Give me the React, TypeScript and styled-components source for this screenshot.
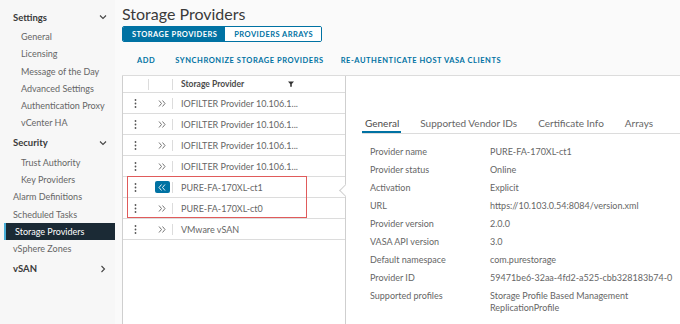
import { Fragment } from "react";
import styled, { createGlobalStyle } from "styled-components";

const GlobalStyle = createGlobalStyle`
  html, body { margin: 0; padding: 0; }
  body {
    font-family: Lato, "Open Sans", sans-serif;
    color: #666;
    background: #fff;
  }
  * { box-sizing: border-box; }
`;

const Page = styled.div`
  display: flex;
  width: 680px;
  height: 324px;
  overflow: hidden;
`;

// ---------- sidebar ----------
const Sidebar = styled.nav`
  width: 115px;
  flex-shrink: 0;
  background: #f7f7f7;
  padding-top: 8px;
  display: flex;
  flex-direction: column;
`;

const GroupHeader = styled.div<{ $first?: boolean }>`
  display: flex;
  align-items: center;
  justify-content: space-between;
  height: 18px;
  margin: ${(p) => (p.$first ? "0 0 2px" : "2px 0")};
  padding: 0 8px 0 13px;
  font-size: 9.5px;
  font-weight: 700;
  color: #3a3a3a;
`;

const NavItem = styled.div<{ $child?: boolean; $active?: boolean }>`
  height: 17.3px;
  line-height: 17.3px;
  font-size: 9px;
  white-space: nowrap;
  padding-left: ${(p) => (p.$child ? 21 : 13)}px;
  color: #666;
  ${(p) =>
    p.$active &&
    `
    margin-left: 4px;
    padding-left: 9px;
    border-left: 2px solid #49afd9;
    background: #1b2a35;
    color: #fff;
  `}
`;

// ---------- main ----------
const Main = styled.main`
  flex: 1;
  min-width: 0;
  display: flex;
  flex-direction: column;
  background: #fafafa;
  padding: 4px 0 0 7px;
`;

const Title = styled.h1`
  margin: 0;
  font-size: 16px;
  font-weight: 400;
  line-height: 20px;
  color: #3a3a3a;
`;

const SegmentGroup = styled.div`
  display: flex;
  align-self: flex-start;
  margin-top: 2px;
  height: 16px;
  border: 1px solid #0072a3;
  border-radius: 2px;
  overflow: hidden;
`;

const Segment = styled.div<{ $active?: boolean }>`
  display: flex;
  align-items: center;
  padding: 0 8px 0 9px;
  font-size: 7.5px;
  font-weight: 700;
  letter-spacing: 0.45px;
  background: ${(p) => (p.$active ? "#0072a3" : "#fff")};
  color: ${(p) => (p.$active ? "#fff" : "#0072a3")};
`;

const ActionBar = styled.div`
  display: flex;
  align-items: center;
  height: 33px;
  padding: 3px 0 0 5px;
`;

const ActionLink = styled.span`
  padding: 0 10px;
  font-size: 7.5px;
  font-weight: 700;
  letter-spacing: 0.55px;
  color: #0072a3;
  white-space: nowrap;
  &:last-child {
    margin-left: -3px;
  }
`;

const Content = styled.div`
  flex: 1;
  display: flex;
  min-height: 0;
  border-top: 1px solid #dcdcdc;
  background: #fff;
`;

// ---------- grid ----------
const Grid = styled.div`
  position: relative;
  width: 224px;
  flex-shrink: 0;
  border-left: 1px solid #cfcfcf;
  border-right: 1px solid #cfcfcf;
`;

const HeaderRow = styled.div`
  display: flex;
  align-items: center;
  height: 17px;
  border-bottom: 1px solid #dcdcdc;
  font-size: 8.5px;
  font-weight: 700;
  color: #4a4a4a;
`;

const Row = styled.div`
  display: flex;
  align-items: center;
  height: 21px;
  border-bottom: 1px solid #dcdcdc;
  font-size: 9px;
  color: #666;
`;

const DotsCell = styled.div`
  width: 25px;
  height: 11px;
  display: flex;
  align-items: center;
  justify-content: center;
`;

const ExpandCell = styled.div<{ $divider?: boolean }>`
  width: 24px;
  height: 11px;
  display: flex;
  align-items: center;
  justify-content: center;
  padding-left: 3px;
  border-left: 1px solid ${(p) => (p.$divider ? "#dcdcdc" : "transparent")};
`;

const NameCell = styled.div`
  width: 130px;
  height: 11px;
  display: flex;
  align-items: center;
  justify-content: space-between;
  padding: 0 8px;
  border-left: 1px solid #dcdcdc;
  white-space: nowrap;
`;

const ExpandButton = styled.div<{ $selected?: boolean }>`
  display: flex;
  align-items: center;
  justify-content: center;
  width: 15px;
  height: 12px;
  border-radius: 2px;
  background: ${(p) => (p.$selected ? "#0072a3" : "transparent")};
`;

const Highlight = styled.div`
  position: absolute;
  left: 4px;
  top: 100px;
  width: 180px;
  height: 42px;
  border: 1.5px solid #e05b5b;
  pointer-events: none;
`;

const Pointer = styled.div`
  position: absolute;
  left: 218px;
  top: 110px;
  width: 9px;
  height: 9px;
  background: #fff;
  border-left: 1px solid #cfcfcf;
  border-bottom: 1px solid #cfcfcf;
  transform: rotate(45deg);
`;

// ---------- detail ----------
const Detail = styled.section`
  flex: 1;
  min-width: 0;
  padding: 37px 0 0 16px;
`;

const TabBar = styled.div`
  display: flex;
  height: 21px;
  border-bottom: 1px solid #dcdcdc;
`;

const Tab = styled.div<{ $active?: boolean }>`
  height: 20px;
  line-height: 20px;
  padding: 0 2px 0 3px;
  margin-right: 16px;
  font-size: 10px;
  white-space: nowrap;
  color: ${(p) => (p.$active ? "#4a4a4a" : "#666")};
  border-bottom: 2px solid ${(p) => (p.$active ? "#0072a3" : "transparent")};
`;

const PropList = styled.dl`
  display: grid;
  grid-template-columns: 120px 1fr;
  margin: 9px 0 0 8px;
  font-size: 9px;
  color: #666;
`;

const PropLabel = styled.dt`
  padding: 2.75px 0;
  line-height: 12.5px;
  white-space: nowrap;
`;

const PropValue = styled.dd`
  margin: 0;
  padding: 2.75px 0;
  line-height: 12.5px;
  white-space: nowrap;
`;

// ---------- icons ----------
const Chevron = ({ dir }: { dir: "down" | "right" }) => (
  <svg width="8" height="8" viewBox="0 0 8 8">
    <path
      d={dir === "down" ? "M1 2.5 L4 5.5 L7 2.5" : "M2.5 1 L5.5 4 L2.5 7"}
      fill="none"
      stroke="#444"
      strokeWidth="1.1"
    />
  </svg>
);

const Dots = () => (
  <svg width="3" height="9" viewBox="0 0 3 9">
    <circle cx="1.5" cy="1" r="0.9" fill="#555" />
    <circle cx="1.5" cy="4.5" r="0.9" fill="#555" />
    <circle cx="1.5" cy="8" r="0.9" fill="#555" />
  </svg>
);

const DoubleChevron = ({ left, color }: { left?: boolean; color: string }) => (
  <svg width="8" height="7" viewBox="0 0 8 7">
    <path
      d={
        left
          ? "M3.5 0.5 L1 3.5 L3.5 6.5 M7 0.5 L4.5 3.5 L7 6.5"
          : "M1 0.5 L3.5 3.5 L1 6.5 M4.5 0.5 L7 3.5 L4.5 6.5"
      }
      fill="none"
      stroke={color}
      strokeWidth="0.9"
    />
  </svg>
);

const Filter = () => (
  <svg width="6" height="6" viewBox="0 0 6 6">
    <path d="M0 0.5 H6 L3.8 3 V5.8 H2.2 V3 Z" fill="#333" />
  </svg>
);

const providers = [
  "IOFILTER Provider 10.106.1...",
  "IOFILTER Provider 10.106.1...",
  "IOFILTER Provider 10.106.1...",
  "IOFILTER Provider 10.106.1...",
  "PURE-FA-170XL-ct1",
  "PURE-FA-170XL-ct0",
  "VMware vSAN",
];

const props: [string, string[]][] = [
  ["Provider name", ["PURE-FA-170XL-ct1"]],
  ["Provider status", ["Online"]],
  ["Activation", ["Explicit"]],
  ["URL", ["https://10.103.0.54:8084/version.xml"]],
  ["Provider version", ["2.0.0"]],
  ["VASA API version", ["3.0"]],
  ["Default namespace", ["com.purestorage"]],
  ["Provider ID", ["59471be6-32aa-4fd2-a525-cbb328183b74-0"]],
  ["Supported profiles", ["Storage Profile Based Management", "ReplicationProfile"]],
];

export default function App() {
  return (
    <>
      <GlobalStyle />
      <Page>
        <Sidebar>
          <GroupHeader $first>
            Settings <Chevron dir="down" />
          </GroupHeader>
          <NavItem $child>General</NavItem>
          <NavItem $child>Licensing</NavItem>
          <NavItem $child>Message of the Day</NavItem>
          <NavItem $child>Advanced Settings</NavItem>
          <NavItem $child>Authentication Proxy</NavItem>
          <NavItem $child>vCenter HA</NavItem>
          <GroupHeader>
            Security <Chevron dir="down" />
          </GroupHeader>
          <NavItem $child>Trust Authority</NavItem>
          <NavItem $child>Key Providers</NavItem>
          <NavItem>Alarm Definitions</NavItem>
          <NavItem>Scheduled Tasks</NavItem>
          <NavItem $active>Storage Providers</NavItem>
          <NavItem>vSphere Zones</NavItem>
          <GroupHeader>
            vSAN <Chevron dir="right" />
          </GroupHeader>
        </Sidebar>

        <Main>
          <Title>Storage Providers</Title>
          <SegmentGroup>
            <Segment $active>STORAGE PROVIDERS</Segment>
            <Segment>PROVIDERS ARRAYS</Segment>
          </SegmentGroup>
          <ActionBar>
            <ActionLink>ADD</ActionLink>
            <ActionLink>SYNCHRONIZE STORAGE PROVIDERS</ActionLink>
            <ActionLink>RE-AUTHENTICATE HOST VASA CLIENTS</ActionLink>
          </ActionBar>

          <Content>
            <Grid>
              <HeaderRow>
                <DotsCell />
                <ExpandCell $divider />
                <NameCell>
                  Storage Provider <Filter />
                </NameCell>
              </HeaderRow>
              {providers.map((name, i) => (
                <Row key={i}>
                  <DotsCell>
                    <Dots />
                  </DotsCell>
                  <ExpandCell>
                    <ExpandButton $selected={i === 4}>
                      <DoubleChevron left={i === 4} color={i === 4 ? "#fff" : "#666"} />
                    </ExpandButton>
                  </ExpandCell>
                  <NameCell>{name}</NameCell>
                </Row>
              ))}
              <Highlight />
              <Pointer />
            </Grid>

            <Detail>
              <TabBar>
                <Tab $active>General</Tab>
                <Tab>Supported Vendor IDs</Tab>
                <Tab>Certificate Info</Tab>
                <Tab>Arrays</Tab>
              </TabBar>
              <PropList>
                {props.map(([label, values]) => (
                  <Fragment key={label}>
                    <PropLabel>{label}</PropLabel>
                    <PropValue>
                      {values.map((v) => (
                        <div key={v}>{v}</div>
                      ))}
                    </PropValue>
                  </Fragment>
                ))}
              </PropList>
            </Detail>
          </Content>
        </Main>
      </Page>
    </>
  );
}
